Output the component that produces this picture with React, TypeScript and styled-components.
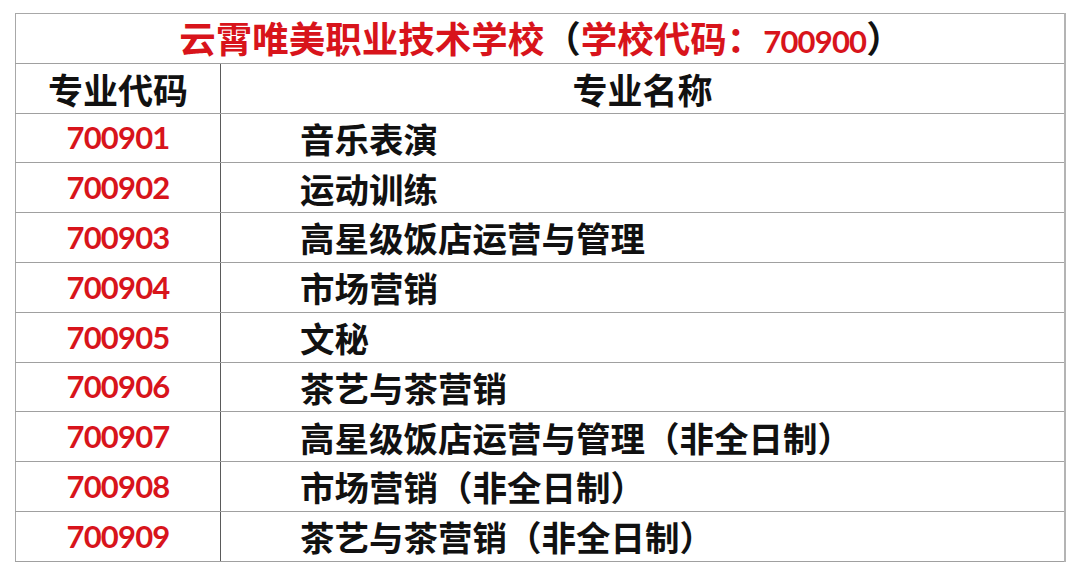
import React from "react";
import styled, { createGlobalStyle } from "styled-components";

const GlobalStyle = createGlobalStyle`
  html, body {
    margin: 0;
    padding: 0;
    background: #ffffff;
  }
  body {
    font-family: "Liberation Sans", "Noto Sans CJK SC", sans-serif;
    text-spacing-trim: space-all;
  }
`;

const Page = styled.div`
  width: 1080px;
  height: 581px;
  padding: 13px 0 0 15px;
  box-sizing: border-box;
  background: #fff;
`;

const Table = styled.table`
  width: 1051px;
  height: 548px;
  border-collapse: collapse;
  table-layout: fixed;
  border: 1px solid #a8a8a8;
  border-right: 2px solid #b4b4b4;
`;

const CodeCol = styled.col`
  width: 205px;
`;

const NameCol = styled.col`
  width: auto;
`;

const Row = styled.tr`
  height: 49.8px;
`;

const TitleCell = styled.td`
  text-align: center;
  padding: 0 0 0 2px;
  border-bottom: 1px solid #a0a0a0;
  font-family: "Noto Sans CJK SC", sans-serif;
  font-weight: 700;
  font-size: 36.5px;
  line-height: 1;
  color: #d8141b;
  white-space: nowrap;
`;

const Paren = styled.span`
  color: #111;
`;

const Digits = styled.span`
  font-family: "Lato", "Liberation Sans", sans-serif;
  font-weight: 700;
  font-size: 31px;
  letter-spacing: -0.8px;
`;

const CodeCell = styled.td<{ $head?: boolean }>`
  padding: 0;
  text-align: center;
  border-right: 1px solid #5a5a5a;
  border-bottom: 1px solid #a0a0a0;
  font-family: ${(p) => (p.$head ? '"Noto Sans CJK SC", sans-serif' : '"Lato", "Liberation Sans", sans-serif')};
  font-weight: 700;
  font-size: ${(p) => (p.$head ? 35 : 31)}px;
  letter-spacing: ${(p) => (p.$head ? 0 : -0.8)}px;
  line-height: 1;
  color: ${(p) => (p.$head ? "#111" : "#d8141b")};
`;

const NameCell = styled.td<{ $head?: boolean }>`
  padding: ${(p) => (p.$head ? "0" : "0 0 0 79px")};
  text-align: ${(p) => (p.$head ? "center" : "left")};
  border-bottom: 1px solid #a0a0a0;
  font-family: "Noto Sans CJK SC", sans-serif;
  font-weight: 700;
  font-size: ${(p) => (p.$head ? 35 : 34.5)}px;
  line-height: 1;
  color: #111;
  white-space: nowrap;
`;

const majors = [
  { code: "700901", name: "音乐表演" },
  { code: "700902", name: "运动训练" },
  { code: "700903", name: "高星级饭店运营与管理" },
  { code: "700904", name: "市场营销" },
  { code: "700905", name: "文秘" },
  { code: "700906", name: "茶艺与茶营销" },
  { code: "700907", name: "高星级饭店运营与管理（非全日制）" },
  { code: "700908", name: "市场营销（非全日制）" },
  { code: "700909", name: "茶艺与茶营销（非全日制）" },
];

export default function App() {
  return (
    <Page>
      <GlobalStyle />
      <Table>
        <colgroup>
          <CodeCol />
          <NameCol />
        </colgroup>
        <tbody>
          <Row>
            <TitleCell colSpan={2}>
              云霄唯美职业技术学校<Paren>（</Paren>学校代码：<Digits>700900</Digits>
              <Paren>）</Paren>
            </TitleCell>
          </Row>
          <Row>
            <CodeCell $head>专业代码</CodeCell>
            <NameCell $head>专业名称</NameCell>
          </Row>
          {majors.map((m) => (
            <Row key={m.code}>
              <CodeCell>{m.code}</CodeCell>
              <NameCell>{m.name}</NameCell>
            </Row>
          ))}
        </tbody>
      </Table>
    </Page>
  );
}
